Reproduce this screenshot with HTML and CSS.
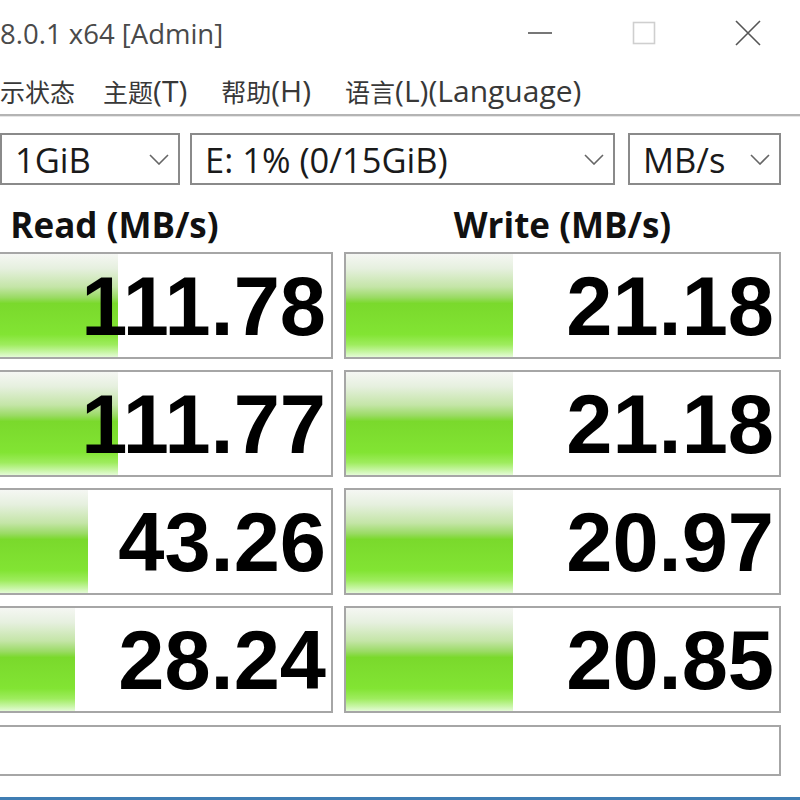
FILE: index.html
```html
<!DOCTYPE html>
<html lang="zh">
<head>
<meta charset="utf-8">
<title>CrystalDiskMark</title>
<link rel="stylesheet" href="styles.css">
</head>
<body>
<div class="window">
  <div class="titlebar">
    <span class="title">8.0.1 x64 [Admin]</span>
    <div class="caption">
      <span class="cbtn"><svg width="26" height="4" viewBox="0 0 26 4"><line x1="1" y1="2" x2="25" y2="2" stroke="#555" stroke-width="1.6"/></svg></span>
      <span class="cbtn"><svg width="24" height="24" viewBox="0 0 24 24"><rect x="1.5" y="1.5" width="21" height="21" fill="none" stroke="#cfcfcf" stroke-width="1.6"/></svg></span>
      <span class="cbtn"><svg width="26" height="26" viewBox="0 0 26 26"><path d="M1 1 L25 25 M25 1 L1 25" stroke="#555" stroke-width="1.6" fill="none"/></svg></span>
    </div>
  </div>
  <div class="menubar">
    <span class="menu m1"><span class="cjk">示状态</span></span>
    <span class="menu m2"><span class="cjk">主题</span>(T)</span>
    <span class="menu m3"><span class="cjk">帮助</span>(H)</span>
    <span class="menu m4"><span class="cjk">语言</span>(L)(Language)</span>
  </div>
  <div class="controls">
    <div class="select s-size"><span>1GiB</span><svg class="chev" width="20" height="11" viewBox="0 0 20 11"><path d="M1 1 L10 10 L19 1" stroke="#666" stroke-width="1.6" fill="none"/></svg></div>
    <div class="select s-drive"><span>E: 1% (0/15GiB)</span><svg class="chev" width="20" height="11" viewBox="0 0 20 11"><path d="M1 1 L10 10 L19 1" stroke="#666" stroke-width="1.6" fill="none"/></svg></div>
    <div class="select s-unit"><span>MB/s</span><svg class="chev" width="20" height="11" viewBox="0 0 20 11"><path d="M1 1 L10 10 L19 1" stroke="#666" stroke-width="1.6" fill="none"/></svg></div>
  </div>
  <div class="results">
    <div class="head">Read (MB/s)</div>
    <div class="head">Write (MB/s)</div>
    <div class="cell" style="--w:220px">111.78</div>
    <div class="cell" style="--w:167px">21.18</div>
    <div class="cell" style="--w:220px">111.77</div>
    <div class="cell" style="--w:167px">21.18</div>
    <div class="cell" style="--w:190px">43.26</div>
    <div class="cell" style="--w:167px">20.97</div>
    <div class="cell" style="--w:177px">28.24</div>
    <div class="cell" style="--w:167px">20.85</div>
    <div class="status"></div>
  </div>
  <div class="taskline"></div>
</div>
</body>
</html>
```
FILE: styles.css
```css
html, body {
  margin: 0;
  padding: 0;
  background: #ffffff;
}
.window {
  width: 800px;
  height: 800px;
  overflow: hidden;
  position: relative;
  background: #ffffff;
  font-family: "Open Sans", "Noto Sans CJK SC", sans-serif;
  display: flex;
  flex-direction: column;
}
.titlebar {
  height: 66px;
  display: flex;
  align-items: center;
  flex-shrink: 0;
}
.title {
  font-size: 27.5px;
  color: #4a4a4a;
  white-space: nowrap;
}
.caption {
  margin-left: auto;
  display: flex;
  height: 66px;
}
.cbtn {
  width: 104px;
  display: flex;
  align-items: center;
  justify-content: center;
}
.menubar {
  height: 48px;
  display: flex;
  align-items: center;
  border-bottom: 2px solid #b4b4b4;
  box-shadow: 0 1px 0 #e6e6e6;
  flex-shrink: 0;
}
.menu {
  font-size: 30px;
  color: #383838;
  white-space: nowrap;
}
.cjk {
  font-family: "Noto Sans CJK SC", sans-serif;
  font-size: 25px;
}
.m2 { margin-left: 28px; }
.m3 { margin-left: 34px; }
.m4 { margin-left: 34px; }
.controls {
  display: flex;
  margin-top: 17px;
  height: 52px;
  flex-shrink: 0;
}
.select {
  box-sizing: border-box;
  height: 52px;
  border: 2px solid #8a8a8a;
  display: flex;
  align-items: center;
  justify-content: space-between;
  padding: 0 9px 0 13px;
  font-size: 34.5px;
  color: #1a1a1a;
  white-space: nowrap;
}
.s-size { width: 180px; }
.s-drive { width: 425px; margin-left: 10px; }
.s-unit { width: 153px; margin-left: 13px; }
.chev {
  flex-shrink: 0;
}
.results {
  margin-left: -104px;
  display: grid;
  grid-template-columns: 437px 437px;
  grid-template-rows: 56px 107px 107px 107px 107px 52px;
  column-gap: 11px;
  row-gap: 11px;
}
.head {
  font-weight: 700;
  font-size: 35px;
  color: #111111;
  text-align: center;
  line-height: 40px;
  padding-top: 20px;
  white-space: nowrap;
}
.cell {
  box-sizing: border-box;
  border: 2px solid #a6a6a6;
  background-color: #ffffff;
  background-image: linear-gradient(to bottom, #f5f7f3 0%, #e6f0df 14%, #c4e5a7 32%, #9bdb66 42%, #7ad92c 48%, #82e433 78%, #9eec5e 88%, #c6f5a2 95%, #e4fbd6 100%);
  background-size: var(--w) 100%;
  background-repeat: no-repeat;
  display: flex;
  align-items: center;
  justify-content: flex-end;
  padding-right: 5px;
  padding-top: 2px;
  font-family: "Liberation Sans", Arial, sans-serif;
  font-weight: 700;
  font-size: 83px;
  color: #000000;
}
.status {
  grid-column: 1 / span 2;
  margin-top: 1px;
  box-sizing: border-box;
  border: 2px solid #a6a6a6;
  background: #ffffff;
}
.taskline {
  margin-top: auto;
  height: 3px;
  background: #3f7db3;
  flex-shrink: 0;
}
```
